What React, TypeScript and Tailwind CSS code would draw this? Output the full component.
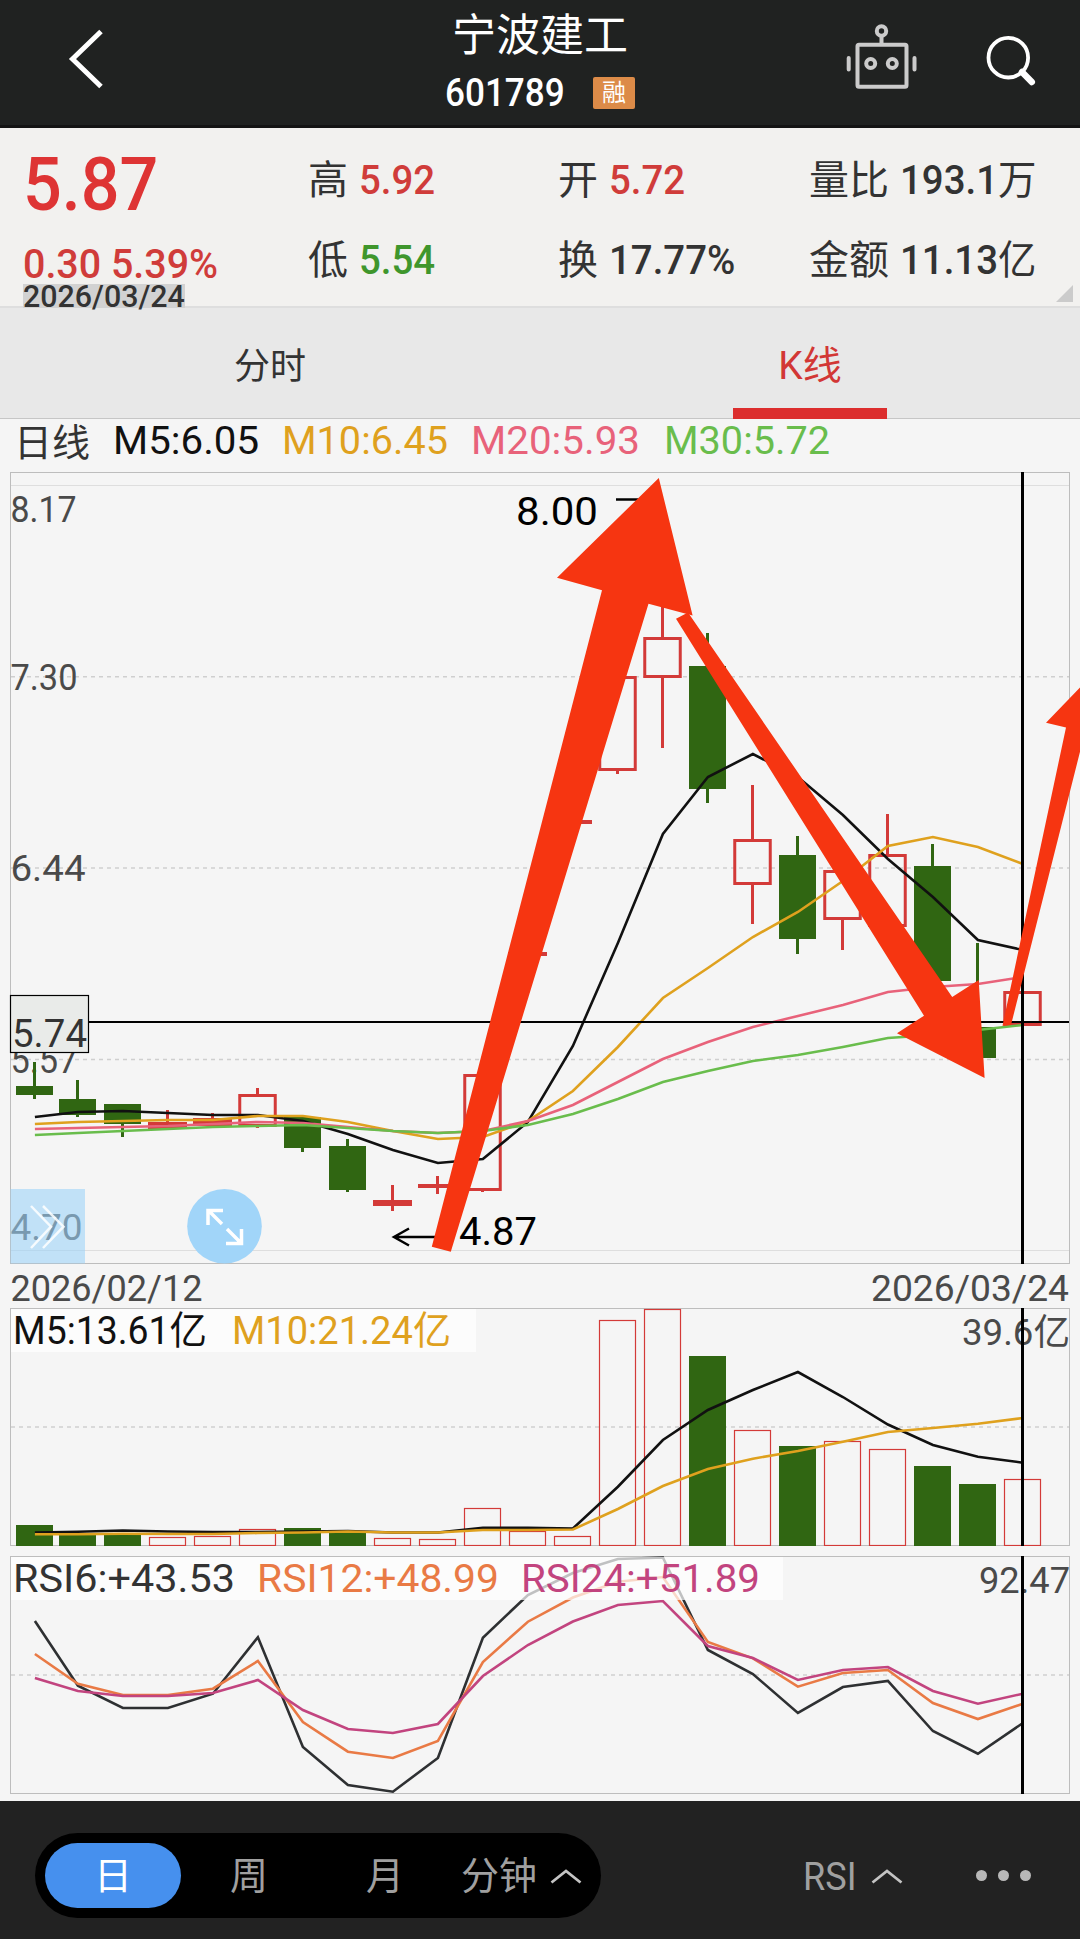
import { ReactNode } from "react";

const RED = "#d33a38";
const GREEN = "#306612";
const FRAME = "#bdbdbd";
const GRID = "#cfcfcf";
const INK = "#111111";
const AMBER = "#dfa11e";
const PINK = "#e8627a";
const LIME = "#69bd4c";

const LATIN = "Roboto, 'Noto Sans CJK SC', sans-serif";

// x centre of the candle at a given index
const cx = (i: number) => (i === 0 ? 34.5 : 77.5 + 45 * (i - 1));

type Candle = {
  up: boolean;
  top: number;
  bottom: number;
  high?: number;
  low?: number;
};

const candles: Candle[] = [
  { up: false, top: 1086, bottom: 1095, high: 1062, low: 1099 },
  { up: false, top: 1099, bottom: 1115, high: 1080, low: 1117 },
  { up: false, top: 1104, bottom: 1124, low: 1137 },
  { up: true, top: 1122, bottom: 1129, high: 1110 },
  { up: true, top: 1118, bottom: 1126, high: 1113 },
  { up: true, top: 1094, bottom: 1127, high: 1088, low: 1128 },
  { up: false, top: 1117, bottom: 1148, low: 1152 },
  { up: false, top: 1146, bottom: 1190, high: 1139, low: 1192 },
  { up: true, top: 1200, bottom: 1206, high: 1185, low: 1211 },
  { up: true, top: 1184, bottom: 1188, high: 1176, low: 1194 },
  { up: true, top: 1074, bottom: 1191, low: 1192 },
  { up: true, top: 952, bottom: 956 },
  { up: true, top: 820, bottom: 824 },
  { up: true, top: 676, bottom: 771, low: 774 },
  { up: true, top: 637, bottom: 678, high: 530, low: 748 },
  { up: false, top: 666, bottom: 789, high: 633, low: 803 },
  { up: true, top: 839, bottom: 885, high: 785, low: 924 },
  { up: false, top: 855, bottom: 939, high: 836, low: 954 },
  { up: true, top: 870, bottom: 920, low: 950 },
  { up: true, top: 854, bottom: 927, high: 814 },
  { up: false, top: 866, bottom: 981, high: 844 },
  { up: false, top: 1027, bottom: 1058, high: 943 },
  { up: true, top: 991, bottom: 1026 },
];

const ma5 = [
  1117, 1112, 1111, 1113, 1115, 1115, 1121, 1134, 1150, 1163, 1159, 1122, 1046,
  943, 834, 777, 754, 777, 815, 859, 897, 940, 950,
];
const ma10 = [
  1124, 1122, 1121, 1120, 1120, 1116, 1116, 1122, 1131, 1139, 1137, 1121, 1091,
  1047, 998, 968, 937, 912, 881, 846, 837, 847, 864,
];
const ma20 = [
  1129, 1128, 1127, 1126, 1124, 1122, 1123, 1127, 1131, 1133, 1131, 1121, 1105,
  1082, 1059, 1042, 1027, 1016, 1005, 992, 987, 984, 977,
];
const ma30 = [
  1135, 1133, 1131, 1129, 1127, 1126, 1125, 1128, 1131, 1133, 1131, 1125, 1114,
  1099, 1082, 1071, 1061, 1055, 1047, 1038, 1035, 1030, 1025,
];

const volumeTops = [
  1525, 1534, 1534, 1537, 1536, 1529, 1528, 1533, 1538, 1539, 1508, 1531, 1536,
  1320, 1309, 1356, 1430, 1446, 1441, 1449, 1466, 1484, 1479,
];
const volMa5 = [
  1532.5, 1531.7, 1530.5, 1531.5, 1532, 1532, 1531.5, 1531, 1532.5, 1532.5,
  1527.7, 1527.7, 1528.5, 1486.7, 1440, 1410, 1390, 1372, 1397, 1424.5, 1445,
  1456.7, 1462.7,
];
const volMa10 = [
  1534.3, 1534.2, 1533.7, 1534, 1534, 1533, 1532.5, 1531.5, 1532.5, 1532.5,
  1530, 1530, 1529.5, 1509, 1486, 1469, 1458.7, 1451, 1441.7, 1432, 1428, 1423.7,
  1418,
];

const rsi6 = [
  1621, 1685.7, 1708, 1708, 1693.7, 1637.3, 1747, 1785, 1791.7, 1758, 1637.7,
  1595, 1573, 1559, 1557.5, 1650, 1674, 1713, 1687, 1681, 1731, 1753.7, 1723,
];
const rsi12 = [
  1654, 1683.7, 1695, 1695, 1688.7, 1661, 1722, 1751.7, 1758, 1741, 1662, 1621.7,
  1597.5, 1581.7, 1577, 1642, 1658.3, 1686.7, 1673, 1670, 1703, 1719, 1703.7,
];
const rsi24 = [
  1678, 1691, 1696, 1696, 1693, 1680, 1710, 1729, 1733, 1724, 1676, 1645, 1621.5,
  1605, 1601, 1646, 1658, 1680, 1670, 1667, 1691, 1703.7, 1693.7,
];

function Line({ ys, color }: { ys: number[]; color: string }) {
  return (
    <polyline
      points={ys.map((y, i) => `${cx(i) + 0.4},${y}`).join(" ")}
      fill="none"
      stroke={color}
      strokeWidth={2.6}
    />
  );
}

function Label({
  x,
  y,
  w,
  size = 36.5,
  color = "#4a4a4a",
  children,
}: {
  x: number;
  y: number;
  w: number;
  size?: number;
  color?: string;
  children: string;
}) {
  return (
    <text
      x={x}
      y={y}
      textLength={w}
      lengthAdjust="spacingAndGlyphs"
      fontSize={size}
      fontFamily={LATIN}
      fill={color}
    >
      {children}
    </text>
  );
}

function Frame({ top, bottom }: { top: number; bottom: number }) {
  return (
    <rect
      x={10.5}
      y={top + 0.5}
      width={1059}
      height={bottom - top}
      fill="none"
      stroke={FRAME}
    />
  );
}

function Dashed({ y }: { y: number }) {
  return (
    <line
      x1={11}
      x2={1069}
      y1={y}
      y2={y}
      stroke={GRID}
      strokeWidth={1.4}
      strokeDasharray="4 4"
    />
  );
}

function CandleShape({ candle, x }: { candle: Candle; x: number }) {
  const { up, top, bottom, high, low } = candle;
  const color = up ? RED : GREEN;
  const h = bottom - top;
  return (
    <g>
      {high && <rect x={x - 1.5} y={high} width={3} height={top - high} fill={color} />}
      {low && <rect x={x - 1.5} y={bottom} width={3} height={low - bottom} fill={color} />}
      {up && h > 10 ? (
        <rect
          x={x - 17.75}
          y={top + 1.5}
          width={35.5}
          height={h - 3}
          fill="none"
          stroke={color}
          strokeWidth={3}
        />
      ) : (
        <rect x={x - (up ? 19.5 : 18.5)} y={top} width={up ? 39 : 37} height={h} fill={color} />
      )}
    </g>
  );
}

function PriceChart() {
  return (
    <svg className="block w-full h-[792px]" viewBox="0 472 1080 792">
      <Frame top={472} bottom={1263} />
      <path d="M11 485.5H1069M11 1250.5H1069" stroke="#dedede" />
      <Dashed y={676.8} />
      <Dashed y={868} />
      <Dashed y={1059.5} />

      <Label x={10.5} y={522} w={66}>8.17</Label>
      <Label x={10.5} y={690} w={67}>7.30</Label>
      <Label x={10.5} y={881} w={75}>6.44</Label>
      <Label x={10.5} y={1073} w={67}>5.57</Label>
      <Label x={10.5} y={1240} w={72}>4.70</Label>

      {candles.map((candle, i) => (
        <CandleShape key={i} candle={candle} x={cx(i)} />
      ))}

      <Line ys={ma5} color={INK} />
      <Line ys={ma10} color={AMBER} />
      <Line ys={ma20} color={PINK} />
      <Line ys={ma30} color={LIME} />

      {/* High / low markers */}
      <Label x={516} y={525} w={82} size={39} color="#000">8.00</Label>
      <path d="M616 499.5H650" stroke="#000" strokeWidth={2.5} />
      <Label x={459} y={1245} w={78} size={39} color="#000">4.87</Label>
      <path d="M440 1237H394M409 1228.5L394 1237L409 1245.5" fill="none" stroke="#000" strokeWidth={2.5} />

      {/* Crosshair */}
      <rect x={88} y={1021} width={981} height={2} fill="#000" />
      <rect x={1021} y={472} width={3} height={792} fill="#000" />
      <rect x={10.5} y={995.5} width={78} height={57} fill="#e9ebe9" stroke="#000" strokeWidth={1.2} />
      <Label x={12} y={1047} w={75} size={39} color="#333">5.74</Label>

      {/* Floating buttons */}
      <rect x={10.5} y={1189} width={74.5} height={74.5} fill="#9bd3f8" fillOpacity={0.58} />
      <path d="M31 1206L51 1226.7L31 1248M43 1206L63.5 1226.7L43 1248" fill="none" stroke="#fff" strokeOpacity={0.85} strokeWidth={2.5} />
      <circle cx={224.5} cy={1226.3} r={37.3} fill="#a1d5f9" />
      <path
        d="M222 1224L208 1210M223 1210.5H208V1225M227 1229L241.5 1243.5M226 1243.5H241.5V1229"
        fill="none"
        stroke="#fff"
        strokeWidth={3.5}
      />
    </svg>
  );
}

function VolumeChart() {
  return (
    <svg className="block w-full h-[238px]" viewBox="0 1308 1080 238">
      <Frame top={1308} bottom={1545} />
      <Dashed y={1427} />
      <Label x={962} y={1345} w={108}>39.6亿</Label>
      {volumeTops.map((top, i) =>
        candles[i].up ? (
          <rect key={i} x={cx(i) - 18} y={top + 0.5} width={36} height={1545 - top} fill="none" stroke={RED} strokeWidth={1.2} />
        ) : (
          <rect key={i} x={cx(i) - 18.5} y={top} width={37} height={1546 - top} fill={GREEN} />
        ),
      )}
      <Line ys={volMa5} color={INK} />
      <Line ys={volMa10} color={AMBER} />
      <rect x={11} y={1309} width={465} height={43} fill="#fff" fillOpacity={0.7} />
      <Label x={13} y={1344} w={194} size={39} color={INK}>M5:13.61亿</Label>
      <Label x={232} y={1344} w={219} size={39} color={AMBER}>M10:21.24亿</Label>
      <rect x={1021} y={1308} width={3} height={238} fill="#000" />
    </svg>
  );
}

function RsiChart() {
  return (
    <svg className="block w-full h-[238px]" viewBox="0 1556 1080 238">
      <Frame top={1556} bottom={1793} />
      <Dashed y={1675} />
      <Label x={979} y={1593} w={91}>92.47</Label>
      <Line ys={rsi6} color="#2e3032" />
      <Line ys={rsi12} color="#e97a45" />
      <Line ys={rsi24} color="#c2447f" />
      <rect x={11} y={1557} width={772} height={43} fill="#fff" fillOpacity={0.7} />
      <Label x={13} y={1592} w={222} size={39} color="#333">RSI6:+43.53</Label>
      <Label x={257} y={1592} w={242} size={39} color="#e97a45">RSI12:+48.99</Label>
      <Label x={521} y={1592} w={239} size={39} color="#c2447f">RSI24:+51.89</Label>
      <rect x={1021} y={1556} width={3} height={238} fill="#000" />
    </svg>
  );
}

// Hand-drawn trend arrows lying over the charts
function TrendArrows() {
  return (
    <svg className="absolute left-0 top-0 w-full h-[792px] pointer-events-none" viewBox="0 472 1080 792">
      <g fill="#f63511">
        <path d="M658.8 478L692.6 615.5L648.5 603.7L450.8 1251.7L431.8 1246.7L602 590.3L557 577.7Z" />
        <path d="M676 618.7L688 612.5L952.2 997L978.7 980L984.6 1078L897 1033.3L924 1015.7Z" />
        <path d="M1002.5 1025.7L1066 727.5L1046 722.7L1096 671L1110 738L1085 732L1011 1025Z" />
      </g>
    </svg>
  );
}

function Header() {
  return (
    <header className="h-32 bg-[#202221] border-b-[3px] border-[#141414] flex text-white">
      <svg className="w-[360px] h-[125px]" viewBox="0 0 360 125">
        <path d="M101 31.5L72.5 59L101 86.5" fill="none" stroke="#fff" strokeWidth={5} />
      </svg>
      <div className="w-[360px] flex flex-col items-center">
        <h1 className="mt-2 text-[44px] leading-[56px] whitespace-nowrap">宁波建工</h1>
        <div className="h-[58px] w-[190px] flex items-center justify-between">
          <div className="w-[120px] text-[39px] font-medium">
            <span className="inline-block origin-left scale-x-[0.9]">601789</span>
          </div>
          <span className="w-[42px] h-8 rounded-xs bg-[#dc8b48] text-[24px] leading-[32px] text-center">
            融
          </span>
        </div>
      </div>
      <svg className="w-[360px] h-[125px]" viewBox="720 0 360 125" fill="none">
        <g stroke="#cbcbcb" strokeWidth={4} strokeLinecap="round">
          <circle cx={881.5} cy={31} r={4.7} />
          <path d="M881.5 36V43M848.7 58V69.5M914.5 58V69.5" />
          <rect x={857.5} y={44.7} width={49} height={42} rx={1.5} />
          <circle cx={870.7} cy={63.5} r={4.5} />
          <circle cx={892.3} cy={63.5} r={4.5} />
        </g>
        <circle cx={1008.3} cy={57.7} r={19.8} stroke="#fff" strokeWidth={3.8} />
        <path d="M1022 72L1031.8 82" stroke="#fff" strokeWidth={6.5} strokeLinecap="round" />
      </svg>
    </header>
  );
}

function Stat({ label, children }: { label: string; children: ReactNode }) {
  return (
    <div className="flex items-center gap-[11px] h-20 whitespace-nowrap text-[40px] text-[#333]">
      <span>{label}</span>
      <span className="font-medium inline-block origin-left scale-x-[0.96]">{children}</span>
    </div>
  );
}

function Quote() {
  return (
    <section className="h-[180px] bg-[#f2f1ef] border-b-2 border-[#dedede] flex relative">
      <div className="w-[308px] pl-[23px] pt-[10px] text-[#d03c3a] font-medium whitespace-nowrap">
        <div className="h-[88px] text-[75px] leading-[92px] text-[#de3434]">
          <span className="inline-block origin-left scale-x-[0.91]">5.87</span>
        </div>
        <div className="h-[58px] text-[40px] leading-[78px]">
          <span className="inline-block origin-left scale-x-[0.985]">0.30 5.39%</span>
        </div>
        <div className="w-[162px] h-6 bg-[#d2d2d2] text-[31px] leading-[25px] text-[#333] relative">
          <span className="inline-block origin-left scale-x-[0.98]">2026/03/24</span>
        </div>
      </div>
      <div className="w-[250px] pt-[13px]">
        <Stat label="高"><span className="text-[#d03c3a]">5.92</span></Stat>
        <Stat label="低"><span className="text-[#3f962c]">5.54</span></Stat>
      </div>
      <div className="w-[251px] pt-[13px]">
        <Stat label="开"><span className="text-[#d03c3a]">5.72</span></Stat>
        <Stat label="换">17.77%</Stat>
      </div>
      <div className="pt-[13px]">
        <Stat label="量比">193.1<span className="font-normal">万</span></Stat>
        <Stat label="金额">11.13<span className="font-normal">亿</span></Stat>
      </div>
      <svg className="absolute right-[7px] bottom-[4px] w-[17px] h-[17px]" viewBox="0 0 17 17">
        <path d="M17 0V17H0Z" fill="#cbcbcb" />
      </svg>
    </section>
  );
}

function Tabs() {
  return (
    <nav className="h-[111px] bg-[#e8e8e8] border-b border-[#c6c6c6] grid grid-cols-2 text-[36px] text-[#333]">
      <div className="flex items-center justify-center pt-[6px]">分时</div>
      <div className="flex flex-col items-center text-[#d23735]">
        <div className="h-[100px] flex items-center text-[39px] pt-4">K线</div>
        <div className="w-[154px] h-[11px] shrink-0 bg-[#dc2e2e]" />
      </div>
    </nav>
  );
}

function CaretUp({ className }: { className: string }) {
  return (
    <svg className={className} viewBox="0 0 32 16" fill="none">
      <path d="M1.5 14.5L16 3L30.5 14.5" stroke="#c4c4c4" strokeWidth={2.8} />
    </svg>
  );
}

function Footer() {
  return (
    <footer className="h-[138px] bg-[#222222] flex items-start pt-8 pl-[35px] text-[38px] text-[#a0a0a0] whitespace-nowrap">
      <div className="w-[566px] h-[85px] rounded-full bg-black flex items-center pl-[10px]">
        <div className="w-[136px] h-[65px] rounded-full bg-[#4690ee] text-white flex items-center justify-center pt-[2px]">
          日
        </div>
        <div className="w-[136px] text-center pt-[2px]">周</div>
        <div className="w-[136px] text-center pt-[2px]">月</div>
        <div className="pl-[8px] pt-[2px]">分钟</div>
        <CaretUp className="w-8 h-4 ml-[13px]" />
      </div>
      <div className="ml-[202px] h-[85px] w-[54px]">
        <span className="inline-block leading-[88px] origin-left scale-x-[0.95]">RSI</span>
      </div>
      <div className="h-[85px] flex items-center ml-[14px]">
        <CaretUp className="w-8 h-4" />
        <div className="flex gap-[11px] ml-[73px]">
          <span className="size-[11px] rounded-full bg-[#b8b8b8]" />
          <span className="size-[11px] rounded-full bg-[#b8b8b8]" />
          <span className="size-[11px] rounded-full bg-[#b8b8b8]" />
        </div>
      </div>
    </footer>
  );
}

export default function App() {
  return (
    <main className="w-[1080px] h-[1939px] overflow-hidden bg-[#f5f5f5] font-[Roboto,'Noto_Sans_CJK_SC',sans-serif]">
      <Header />
      <Quote />
      <Tabs />

      {/* Moving average legend */}
      <svg className="block w-full h-[53px] overflow-visible" viewBox="0 419 1080 53">
        <Label x={14} y={456} w={76} size={38} color="#333">日线</Label>
        <Label x={113} y={454} w={146} size={39} color={INK}>M5:6.05</Label>
        <Label x={282} y={454} w={166} size={39} color={AMBER}>M10:6.45</Label>
        <Label x={471} y={454} w={169} size={39} color={PINK}>M20:5.93</Label>
        <Label x={664} y={454} w={166} size={39} color={LIME}>M30:5.72</Label>
      </svg>

      <div className="relative">
        <PriceChart />
        <TrendArrows />
      </div>
      <svg className="block w-full h-11 overflow-visible" viewBox="0 1264 1080 44">
        <Label x={10.5} y={1301} w={192}>2026/02/12</Label>
        <Label x={871} y={1301} w={198}>2026/03/24</Label>
      </svg>
      <VolumeChart />
      <div className="h-[10px]" />
      <RsiChart />
      <div className="h-[7px]" />
      <Footer />
    </main>
  );
}
